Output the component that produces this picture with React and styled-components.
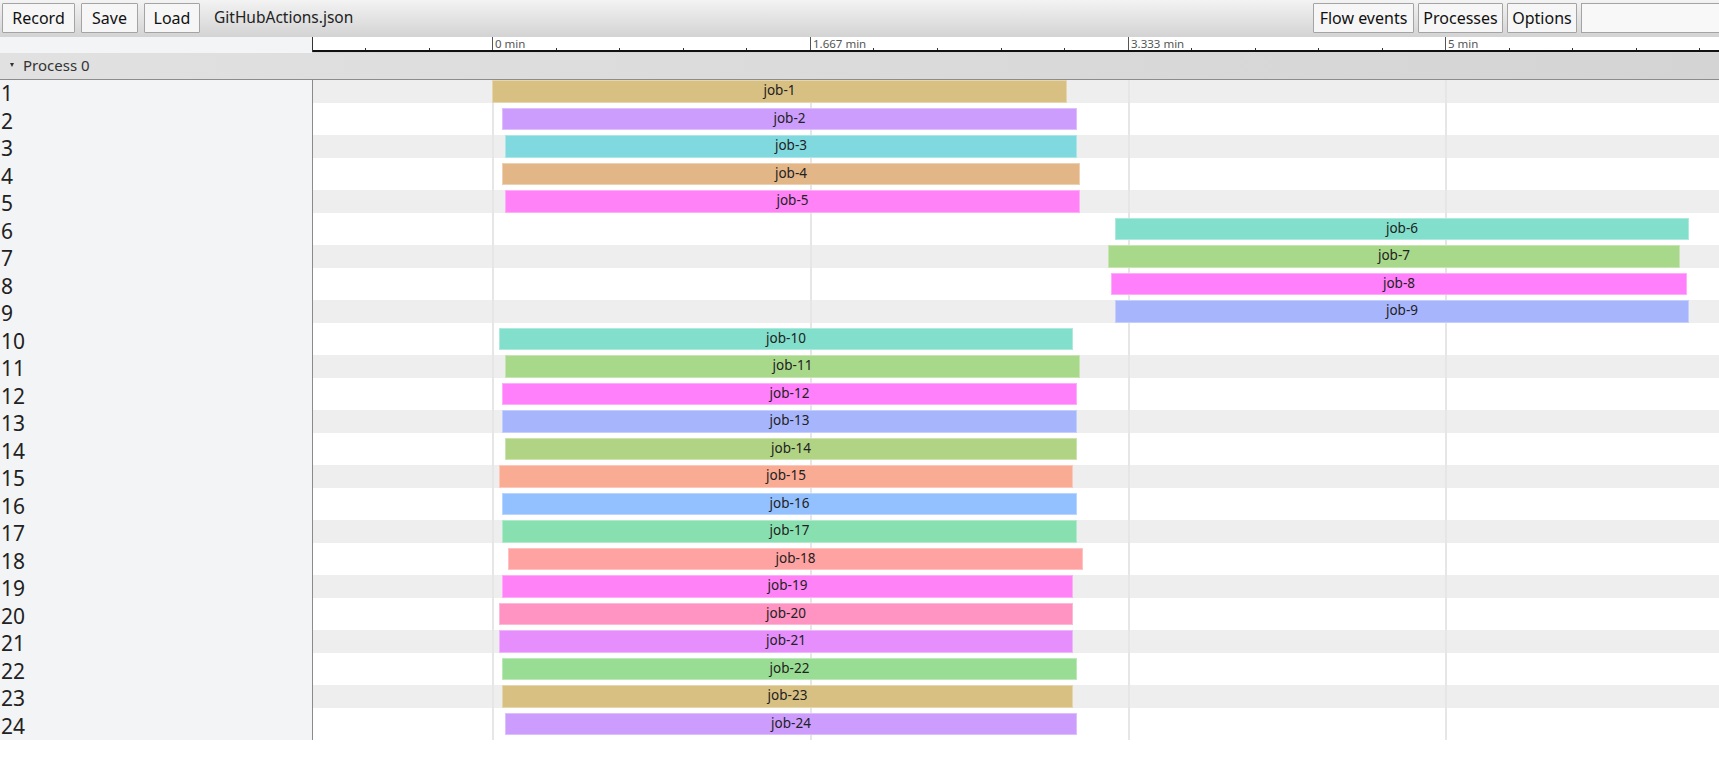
import React from "react";
import styled, { createGlobalStyle } from "styled-components";

const TRACK_LEFT = 313;
const ZERO_X = 492.7;
const MAJOR = 317.7;
const MINOR = MAJOR / 5;
const ROW_H = 27.5;
const BAND_H = 22.5;

const jobs = [
    [492, 1067, "#d8c083"],
    [502, 1077, "#cc9dfd"],
    [505, 1077, "#80d9de"],
    [502, 1080, "#e3b688"],
    [505, 1080, "#ff82f6"],
    [1115, 1689, "#81dfcb"],
    [1108, 1680, "#a8d889"],
    [1111, 1687, "#ff80fa"],
    [1115, 1689, "#a7b5fd"],
    [499, 1073, "#81dfcb"],
    [505, 1080, "#a8d889"],
    [502, 1077, "#ff80fa"],
    [502, 1077, "#a7b5fd"],
    [505, 1077, "#b1d384"],
    [499, 1073, "#f9ab94"],
    [502, 1077, "#93c0ff"],
    [502, 1077, "#88e0b0"],
    [508, 1083, "#ffa2a2"],
    [502, 1073, "#ff82f6"],
    [499, 1073, "#ff93c1"],
    [499, 1073, "#e68ffc"],
    [502, 1077, "#99dd94"],
    [502, 1073, "#d8c083"],
    [505, 1077, "#cc9dfd"],
];

const majors = ["0 min", "1.667 min", "3.333 min", "5 min"];

const GlobalStyle = createGlobalStyle`
    html, body {
        margin: 0;
        padding: 0;
        background: #ffffff;
        overflow: hidden;
    }
    body {
        font-family: "Noto Sans", "Open Sans", sans-serif;
        color: #222;
    }
`;

const Page = styled.div`
    width: 1719px;
    height: 757px;
    display: flex;
    flex-direction: column;
    overflow: hidden;
`;

const Toolbar = styled.div`
    height: 37px;
    flex: none;
    display: flex;
    align-items: flex-start;
    gap: 6px;
    padding: 3px 0 0 2px;
    box-sizing: border-box;
    background: linear-gradient(to bottom, #f3f3f3, #d3d3d3);
    overflow: hidden;
`;

const Button = styled.button`
    height: 30px;
    width: ${({ w }) => w}px;
    padding: 0;
    margin: 0;
    border: 1px solid #a4a4a4;
    border-radius: 1px;
    background: #f6f6f6;
    font-family: "Noto Sans", sans-serif;
    font-size: 16px;
    color: #111;
    line-height: 27px;
    flex: none;
`;

const FileName = styled.span`
    font-size: 15.5px;
    line-height: 28px;
    color: #222;
    margin-left: 8px;
`;

const Spacer = styled.div`
    flex: 1;
`;

const RightGroup = styled.div`
    display: flex;
    gap: 4px;
    margin-right: -40px;
`;

const Search = styled.div`
    width: 178px;
    height: 30px;
    box-sizing: border-box;
    border: 1px solid #a4a4a4;
    background: #f8f8f8;
    flex: none;
`;

const RulerRow = styled.div`
    height: 16px;
    flex: none;
    display: flex;
    background: #d6d6d6;
`;

const RulerGutter = styled.div`
    width: 312px;
    flex: none;
    background: #f3f4f6;
`;

const Ruler = styled.div`
    flex: 1;
    position: relative;
    background: #ffffff;
    border-left: 1px solid #333;
    height: 15px;
    &::after {
        content: "";
        position: absolute;
        left: 0;
        right: 0;
        top: 13px;
        height: 2px;
        background: #111;
    }
`;

const MajorTick = styled.div`
    position: absolute;
    top: 0;
    height: 14px;
    width: 1px;
    background: #555;
`;

const MinorTick = styled.div`
    position: absolute;
    top: 11px;
    height: 3px;
    width: 1px;
    background: #333;
`;

const TickLabel = styled.span`
    position: absolute;
    top: 0px;
    font-size: 11.5px;
    line-height: 13px;
    color: #555;
    white-space: nowrap;
`;

const ProcessHeader = styled.div`
    height: 27px;
    flex: none;
    box-sizing: border-box;
    border-bottom: 1px solid #8c8c8c;
    background: linear-gradient(to right, #e1e1e1, #d4d4d4);
    display: flex;
    align-items: center;
    padding: 0 0 3px 10px;
    gap: 9px;
    font-size: 15px;
    color: #333;
`;

const Caret = styled.span`
    width: 0;
    height: 0;
    border-left: 2.5px solid transparent;
    border-right: 2.5px solid transparent;
    border-top: 4px solid #333;
    margin-top: 1px;
`;

const Body = styled.div`
    display: flex;
    flex: none;
`;

const Labels = styled.div`
    width: 313px;
    box-sizing: border-box;
    flex: none;
    background: #f3f4f6;
    border-right: 1px solid #8a8a8a;
`;

const Label = styled.div`
    height: ${ROW_H}px;
    font-size: 21px;
    line-height: ${ROW_H}px;
    padding-left: 1px;
    color: #222;
`;

const Track = styled.div`
    flex: 1;
    position: relative;
`;

const Row = styled.div`
    height: ${ROW_H}px;
    position: relative;
`;

const Band = styled.div`
    height: ${BAND_H}px;
    background: ${({ shaded }) => (shaded ? "#eeeeee" : "#ffffff")};
`;

const GridLine = styled.div`
    position: absolute;
    top: 0;
    bottom: 0;
    width: 2px;
    background: #e6e6e6;
    z-index: 1;
`;

const Bar = styled.div`
    position: absolute;
    top: 0;
    height: ${BAND_H}px;
    z-index: 2;
    box-sizing: border-box;
    box-shadow: inset 0 0 0 1px rgba(255, 255, 255, 0.35);
    font-size: 13.5px;
    line-height: ${BAND_H - 1}px;
    text-align: center;
    color: #222;
    white-space: nowrap;
    overflow: hidden;
`;

const minorTicks = [];
for (let k = -2; ZERO_X + k * MINOR < 1719; k++) {
    if (k % 5 !== 0) minorTicks.push(ZERO_X + k * MINOR - TRACK_LEFT);
}

const App = () => {
    return (
        <Page>
            <GlobalStyle />
            <Toolbar>
                <Button w={73}>Record</Button>
                <Button w={57}>Save</Button>
                <Button w={56}>Load</Button>
                <FileName>GitHubActions.json</FileName>
                <Spacer />
                <RightGroup>
                    <Button w={101}>Flow events</Button>
                    <Button w={85}>Processes</Button>
                    <Button w={70}>Options</Button>
                    <Search />
                </RightGroup>
            </Toolbar>

            <RulerRow>
                <RulerGutter />
                <Ruler>
                    {majors.map((m, i) => {
                        const x = Math.floor(ZERO_X + i * MAJOR) - TRACK_LEFT;
                        return (
                            <React.Fragment key={m}>
                                <MajorTick style={{ left: x }} />
                                <TickLabel style={{ left: x + 3 }}>{m}</TickLabel>
                            </React.Fragment>
                        );
                    })}
                    {minorTicks.map((x) => (
                        <MinorTick key={x} style={{ left: Math.floor(x) }} />
                    ))}
                </Ruler>
            </RulerRow>

            <ProcessHeader>
                <Caret />
                <span>Process 0</span>
            </ProcessHeader>

            <Body>
                <Labels>
                    {jobs.map((_, i) => (
                        <Label key={i}>{i + 1}</Label>
                    ))}
                </Labels>
                <Track>
                    {majors.map((m, i) => (
                        <GridLine key={m} style={{ left: Math.floor(ZERO_X + i * MAJOR) - TRACK_LEFT }} />
                    ))}
                    {jobs.map(([start, end, color], i) => (
                        <Row key={i}>
                            <Band shaded={i % 2 === 0} />
                            <Bar style={{ left: start - TRACK_LEFT, width: end - start, background: color }}>
                                job-{i + 1}
                            </Bar>
                        </Row>
                    ))}
                </Track>
            </Body>
        </Page>
    );
};

export default App;
